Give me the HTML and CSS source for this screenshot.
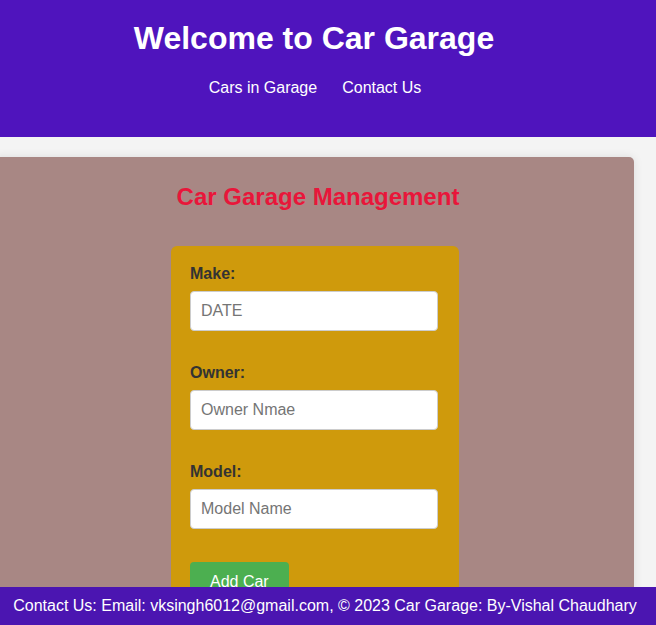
FILE: index.html
```html
<!DOCTYPE html>
<html>
<head>
<meta charset="utf-8">
<title>Car Garage</title>
<link rel="stylesheet" href="styles.css">
</head>
<body>
<header class="site-header">
  <h1 class="site-title">Welcome to Car Garage</h1>
  <nav class="site-nav">
    <a href="#">Cars in Garage</a>
    <a href="#">Contact Us</a>
  </nav>
</header>
<main class="main">
  <section class="container">
    <h2 class="page-title">Car Garage Management</h2>
    <form class="car-form">
      <div class="form-group">
        <label class="form-label">Make:</label>
        <input class="form-input" type="text" placeholder="DATE">
      </div>
      <div class="form-group">
        <label class="form-label">Owner:</label>
        <input class="form-input" type="text" placeholder="Owner Nmae">
      </div>
      <div class="form-group">
        <label class="form-label">Model:</label>
        <input class="form-input" type="text" placeholder="Model Name">
      </div>
      <button class="btn-add" type="button">Add Car</button>
    </form>
  </section>
</main>
<footer class="site-footer">Contact Us: Email: vksingh6012@gmail.com, © 2023 Car Garage: By-Vishal Chaudhary</footer>
</body>
</html>
```
FILE: styles.css
```css
html, body {
  margin: 0;
  padding: 0;
}
body {
  background: #f4f4f4;
  font-family: "Liberation Sans", Arial, sans-serif;
  overflow: hidden;
  height: 625px;
}
.site-header {
  background: #4f14bd;
  color: #fff;
  height: 137px;
  box-sizing: border-box;
  padding-top: 19px;
  padding-right: 28px;
  display: flex;
  flex-direction: column;
  align-items: center;
}
.site-title {
  margin: 0;
  font-size: 32px;
  line-height: 38px;
  font-weight: bold;
}
.site-nav {
  margin-top: 22px;
  margin-left: 2px;
  display: flex;
  gap: 25px;
}
.site-nav a {
  color: #fff;
  text-decoration: none;
  font-size: 16px;
  line-height: 18px;
}
.main {
  padding-top: 20px;
  display: flex;
  justify-content: flex-end;
  padding-right: 22px;
}
.container {
  width: 640px;
  flex: none;
  background: #a88784;
  border-radius: 5px;
  box-shadow: 0 0 10px rgba(0,0,0,0.1);
  padding: 26px 20px 40px;
  box-sizing: border-box;
  display: flex;
  flex-direction: column;
  align-items: center;
  min-height: 600px;
}
.page-title {
  margin: 0;
  color: #e8163a;
  font-size: 24px;
  line-height: 28px;
  font-weight: bold;
  padding-left: 8px;
}
.car-form {
  margin-top: 35px;
  width: 288px;
  box-sizing: border-box;
  background: #cf9a0c;
  border-radius: 6px;
  padding: 19px 21px 40px 19px;
  display: flex;
  flex-direction: column;
  align-items: flex-start;
  margin-left: 2px;
}
.form-group {
  width: 100%;
  display: flex;
  flex-direction: column;
  margin-bottom: 33px;
}
.form-label {
  font-weight: bold;
  font-size: 16px;
  line-height: 18px;
  color: #333;
  margin-bottom: 8px;
}
.form-input {
  width: 100%;
  box-sizing: border-box;
  height: 40px;
  padding: 10px;
  font-size: 16px;
  font-family: "Liberation Sans", Arial, sans-serif;
  border: 1px solid #ccc;
  border-radius: 4px;
  background: #fff;
  color: #333;
}
.form-input::placeholder {
  color: #757575;
}
.btn-add {
  margin-top: 0;
  background: #4caf50;
  color: #fff;
  border: none;
  border-radius: 4px;
  padding: 10px 20px;
  font-size: 16px;
  line-height: 20px;
  font-family: "Liberation Sans", Arial, sans-serif;
  white-space: nowrap;
}
.site-footer {
  position: fixed;
  left: 0;
  right: 0;
  bottom: 0;
  height: 38px;
  background: #4b15b1;
  color: #fff;
  font-size: 16px;
  line-height: 38px;
  text-align: center;
  padding-right: 6px;
}
```
